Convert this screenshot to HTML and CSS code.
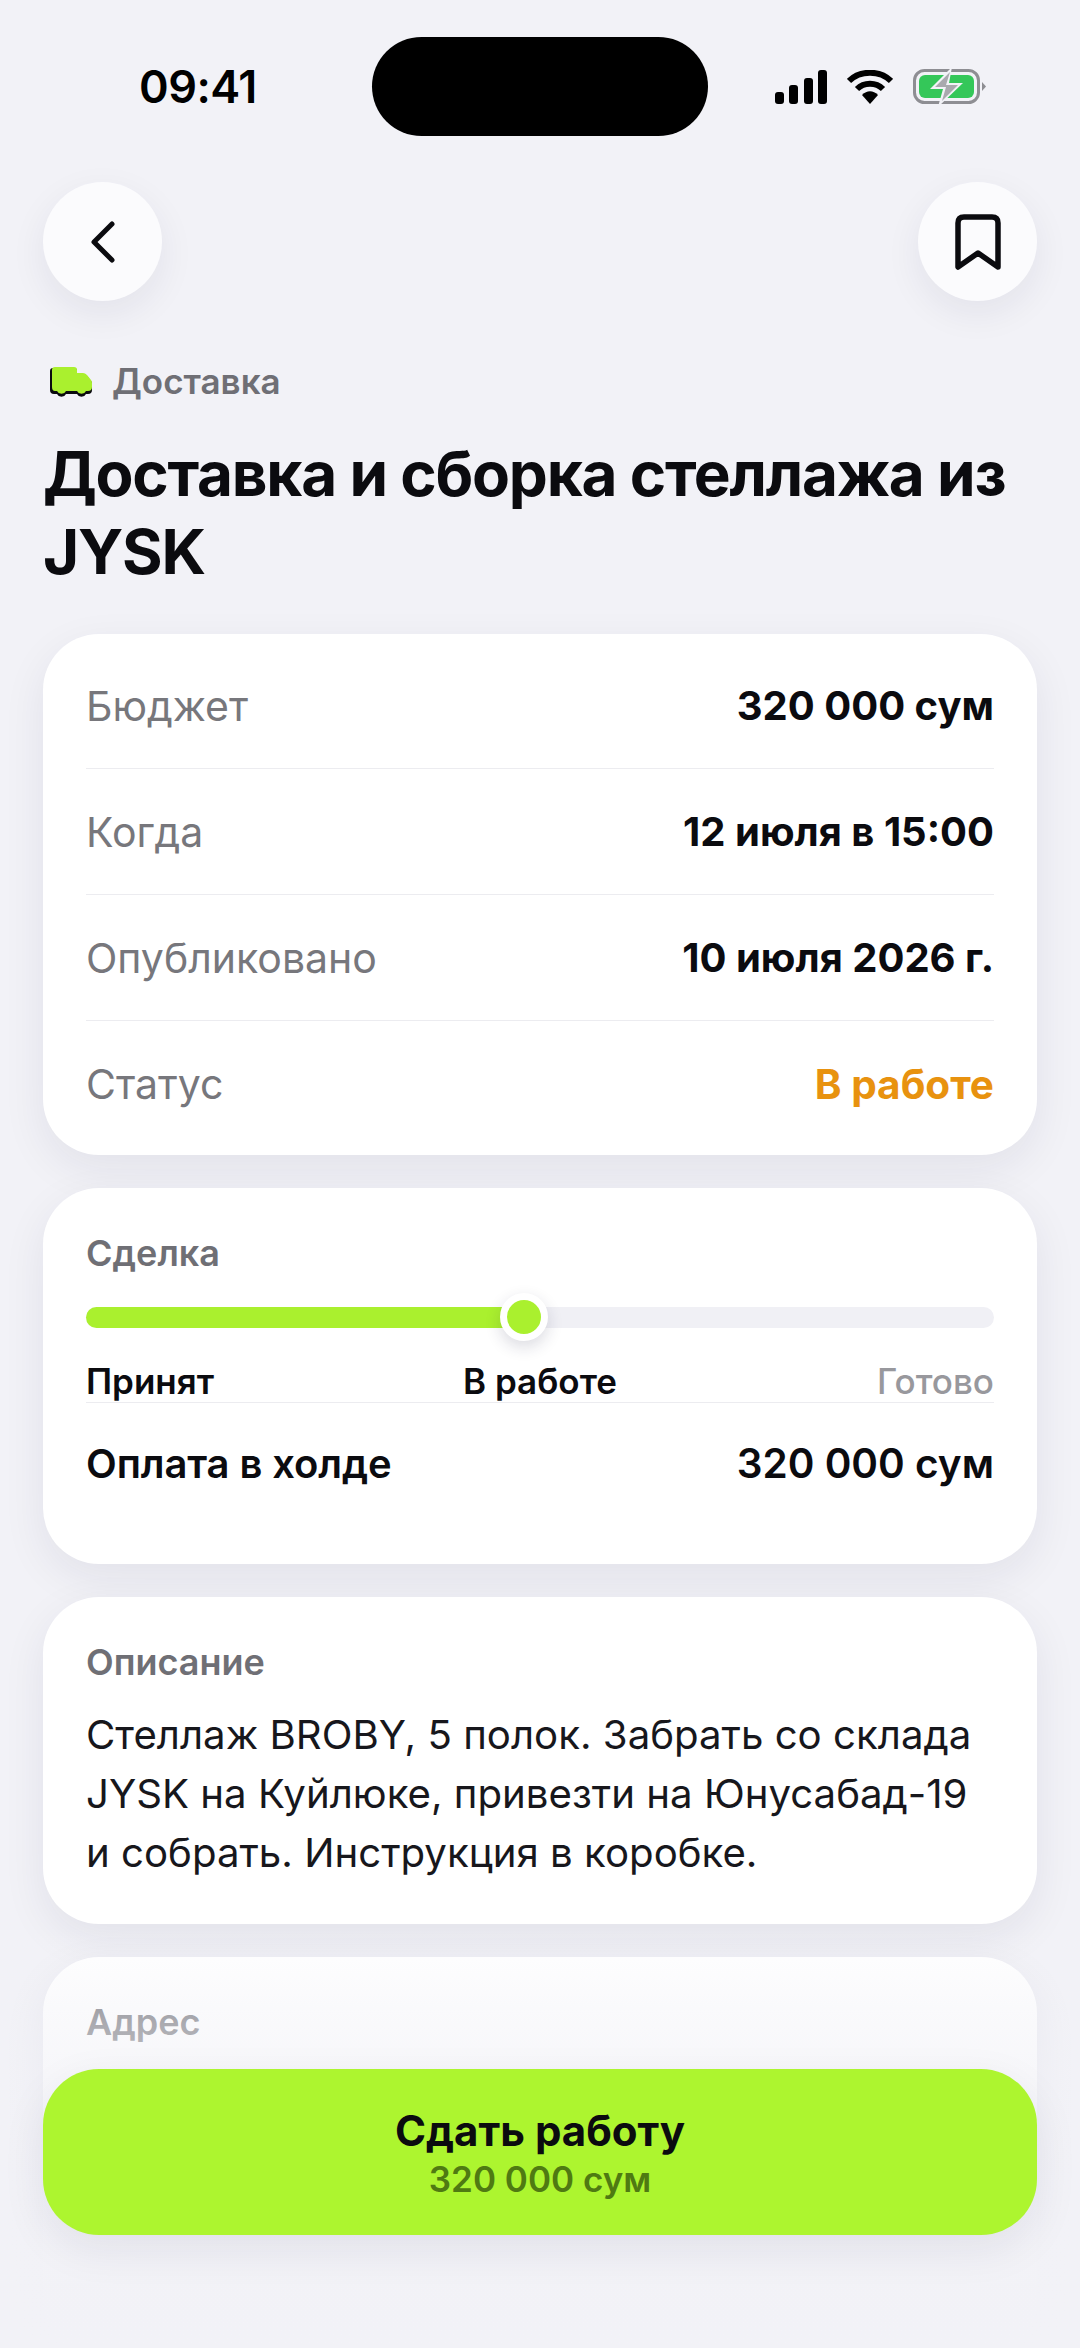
FILE: index.html
```html
<!DOCTYPE html>
<html lang="ru">
<head>
    <meta charset="UTF-8">
    <meta name="viewport" content="width=device-width, initial-scale=1.0">
    <title>Доставка и сборка стеллажа</title>
    <link rel="stylesheet" href="styles.css">
</head>
<body>
<div class="screen">

    <!-- Статус-бар -->
    <div class="status-bar">
        <span class="time">09:41</span>
        <div class="island"></div>
        <div class="status-icons">
            <svg class="signal" width="52" height="34" viewBox="0 0 52 34">
                <rect x="0" y="22" width="9" height="12" rx="3"/>
                <rect x="14" y="15" width="9" height="19" rx="3"/>
                <rect x="29" y="8" width="9" height="26" rx="3"/>
                <rect x="43" y="0" width="9" height="34" rx="3"/>
            </svg>
            <svg class="wifi" width="46" height="34" viewBox="0 0 46 34">
                <path d="M2 11 C13 0 33 0 44 11" fill="none" stroke="#000" stroke-width="6"/>
                <path d="M10 19 C17 12 29 12 36 19" fill="none" stroke="#000" stroke-width="6"/>
                <path d="M15 25 C20 20 26 20 31 25 L23 34 Z"/>
            </svg>
            <svg class="battery" width="74" height="38" viewBox="0 0 74 38">
                <rect x="1.5" y="2.5" width="64" height="32" rx="10" fill="none" stroke="#8e8e93" stroke-width="3"/>
                <rect x="6" y="7" width="55" height="23" rx="6" fill="#34c759"/>
                <path d="M69 14 L73 18.5 L69 23 Z" fill="#8e8e93"/>
                <path d="M39 -1 L17 21 H30 L25 39 L50 15 H36 Z" fill="#f2f2f7"/>
                <path d="M37 4 L22 19 H33 L29 33 L45 17 H33 Z" fill="#a9a9ae"/>
            </svg>
        </div>
    </div>

    <!-- Навигация -->
    <div class="nav">
        <button class="round-btn">
            <svg width="28" height="42" viewBox="0 0 28 42">
                <path d="M23 3 L5 21 L23 39" fill="none" stroke="#0b0b0f" stroke-width="5" stroke-linecap="round" stroke-linejoin="round"/>
            </svg>
        </button>
        <button class="round-btn">
            <svg width="46" height="56" viewBox="0 0 46 56">
                <path d="M3 9 Q3 3 9 3 H37 Q43 3 43 9 V53 L23 39 L3 53 Z" fill="none" stroke="#0b0b0f" stroke-width="5.500" stroke-linejoin="round"/>
            </svg>
        </button>
    </div>

    <div class="category">
        <svg class="truck" width="42" height="31" viewBox="0 0 42 31">
            <path d="M3 0 H24 Q27 0 27 3 V6 H33 Q35 6 37 8 L41 13 Q42 14 42 16 V22 Q42 26 38 26 H36 A5 5 0 0 1 27 26 H16 A5 5 0 0 1 7 26 H4 Q0 26 0 22 V3 Q0 0 3 0 Z" fill="#0b0b0f" transform="translate(0 2)"/>
            <path d="M5 1 H24 Q27 1 27 4 V7 H33 Q35 7 37 9 L41 14 Q42 15 42 17 V21 Q42 25 38 25 H36 A5 5 0 0 1 27 25 H16 A5 5 0 0 1 7 25 H5 Q2 25 2 21 V4 Q2 1 5 1 Z" fill="#aaf02e"/>
        </svg>
        <span>Доставка</span>
    </div>

    <h1 class="title">Доставка и сборка стеллажа из JYSK</h1>

    <div class="cards">
        <section class="card card-info">
            <div class="row"><span class="row-label">Бюджет</span><span class="row-value">320 000 сум</span></div>
            <div class="row"><span class="row-label">Когда</span><span class="row-value">12 июля в 15:00</span></div>
            <div class="row"><span class="row-label">Опубликовано</span><span class="row-value">10 июля 2026 г.</span></div>
            <div class="row"><span class="row-label">Статус</span><span class="row-value status-work">В работе</span></div>
        </section>

        <section class="card card-deal">
            <div class="card-title">Сделка</div>
            <div class="track">
                <div class="track-fill"></div>
                <div class="knob"></div>
            </div>
            <div class="steps">
                <span>Принят</span>
                <span>В работе</span>
                <span class="step-off">Готово</span>
            </div>
            <div class="hold">
                <span>Оплата в холде</span>
                <span class="hold-sum">320 000 сум</span>
            </div>
        </section>

        <section class="card card-desc">
            <div class="card-title">Описание</div>
            <p class="desc">Стеллаж BROBY, 5 полок. Забрать со склада JYSK на Куйлюке, привезти на Юнусабад-19 и собрать. Инструкция в коробке.</p>
        </section>

        <section class="card card-address">
            <div class="card-title">Адрес</div>
        </section>
    </div>

    <!-- Нижний блок поверх контента -->
    <div class="bottom-fade"></div>
    <button class="submit">
        <span class="submit-title">Сдать работу</span>
        <span class="submit-price">320 000 сум</span>
    </button>

</div>
</body>
</html>
```

FILE: styles.css
```css
* {
    box-sizing: border-box;
}

html, body {
    margin: 0;
    padding: 0;
}

body {
    font-family: 'Inter', 'Noto Sans', sans-serif;
    background: #f2f2f7;
    color: #0b0b0f;
}

.screen {
    position: relative;
    width: 1080px;
    height: 2348px;
    overflow: hidden;
    padding: 37px 43px 0;
}

/* Статус-бар */
.status-bar {
    display: flex;
    align-items: center;
    height: 99px;
    padding-left: 96px;
}

.time {
    width: 233px;
    font-size: 45px;
    font-weight: 600;
    letter-spacing: -0.5px;
    color: #000;
}

.island {
    width: 336px;
    height: 99px;
    border-radius: 50px;
    background: #000;
}

.status-icons {
    display: flex;
    align-items: center;
    gap: 20px;
    margin-left: 67px;
}

.nav {
    display: flex;
    justify-content: space-between;
    margin-top: 46px;
}

.round-btn {
    display: flex;
    align-items: center;
    justify-content: center;
    width: 119px;
    height: 119px;
    padding: 0;
    border: none;
    border-radius: 50%;
    background: #fbfbfd;
    box-shadow: 0 12px 36px rgba(30, 30, 70, 0.07);
}

.category {
    display: flex;
    align-items: center;
    gap: 20px;
    height: 42px;
    margin-top: 59px;
    padding-left: 7px;
    font-size: 35px;
    font-weight: 600;
    color: #6f6f75;
}

.title {
    margin: 33px 0 0;
    font-size: 62px;
    line-height: 78px;
    font-weight: 700;
    letter-spacing: -1.250px;
}

.cards {
    display: flex;
    flex-direction: column;
    gap: 33px;
    margin-top: 43px;
}

.card {
    padding: 0 43px;
    border-radius: 56px;
    background: #fff;
    box-shadow: 0 14px 44px rgba(30, 30, 70, 0.075);
}

/* Карточка с параметрами */
.card-info {
    padding-top: 9px;
    padding-bottom: 8px;
}

.row {
    display: flex;
    align-items: center;
    justify-content: space-between;
    height: 126px;
    border-bottom: 1px solid #ececf0;
    font-size: 40px;
}

.row:last-child {
    border-bottom: none;
}

.row-label {
    font-size: 41px;
    color: #77777c;
}

.row-value {
    font-weight: 700;
}

.status-work {
    font-size: 40.500px;
    color: #e8920f;
}

.card-title {
    font-size: 36px;
    line-height: 42px;
    font-weight: 600;
    color: #6f6f75;
}

/* Сделка */
.card-deal {
    height: 376px;
    padding-top: 44px;
}

.track {
    position: relative;
    height: 21px;
    margin-top: 33px;
    border-radius: 11px;
    background: #f0f0f5;
}

.track-fill {
    width: 438px;
    height: 21px;
    border-radius: 11px;
    background: #aaf02e;
}

.knob {
    position: absolute;
    left: 414px;
    top: -14px;
    width: 48px;
    height: 48px;
    border: 7px solid #fff;
    border-radius: 50%;
    background: #aaf02e;
    box-shadow: 0 6px 16px rgba(30, 30, 70, 0.16);
}

.steps {
    display: grid;
    grid-template-columns: 1fr auto 1fr;
    align-items: center;
    height: 75px;
    padding-top: 32px;
    border-bottom: 1px solid #ececf0;
    font-size: 35px;
    font-weight: 600;
    color: #0b0b0f;
}

.step-off {
    justify-self: end;
    font-weight: 500;
    color: #98989d;
}

.hold {
    display: flex;
    justify-content: space-between;
    align-items: center;
    height: 120px;
    font-size: 40px;
    font-weight: 600;
    letter-spacing: -0.1px;
}

.hold-sum {
    font-size: 40.500px;
    letter-spacing: 0;
}

/* Описание */
.card-desc {
    height: 327px;
    padding-top: 44px;
}

.desc {
    margin: 22px 0 0;
    font-size: 40.200px;
    line-height: 59px;
    color: #17171c;
}

.card-address {
    height: 400px;
    padding-top: 44px;
}

/* Нижний блок */
.bottom-fade {
    position: absolute;
    left: 0;
    right: 0;
    top: 1925px;
    bottom: 0;
    background: linear-gradient(to bottom, rgba(242, 242, 247, 0) 0%, rgba(242, 242, 247, 0.45) 23%, rgba(242, 242, 247, 0.96) 60%, #f2f2f7 100%);
}

.submit {
    position: absolute;
    left: 43px;
    right: 43px;
    top: 2069px;
    display: flex;
    flex-direction: column;
    align-items: center;
    justify-content: center;
    gap: 2px;
    height: 166px;
    padding: 0;
    border: none;
    border-radius: 56px;
    background: #adf52f;
    box-shadow: 0 14px 44px rgba(30, 30, 70, 0.08);
    font-family: inherit;
}

.submit-title {
    font-size: 42px;
    font-weight: 700;
    color: #0b0b0f;
}

.submit-price {
    font-size: 35px;
    font-weight: 600;
    color: #4f7a12;
}
```
